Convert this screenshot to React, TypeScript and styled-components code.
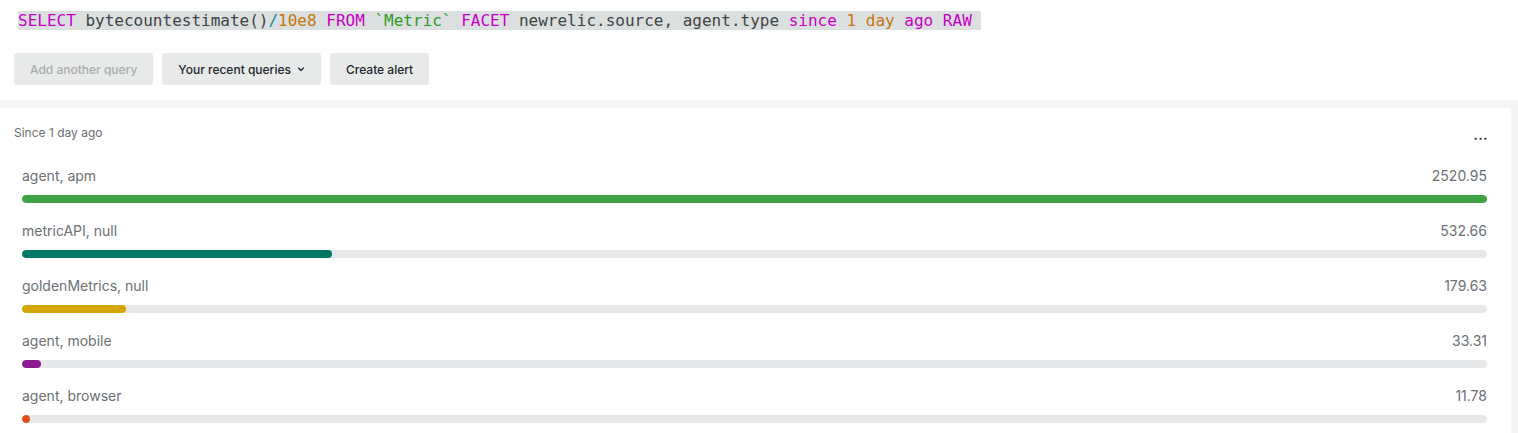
import React from 'react';
import styled, { createGlobalStyle } from 'styled-components';

const TEXT_COLOR = '#6b7075';
const TRACK_COLOR = '#e7e8e9';

const GlobalStyle = createGlobalStyle`
  html, body {
    margin: 0;
    padding: 0;
    background: #ffffff;
  }
  body {
    font-family: Inter, 'Open Sans', 'Liberation Sans', sans-serif;
    -webkit-font-smoothing: antialiased;
  }
`;

type Facet = {
  name: string;
  value: number;
  color: string;
};

const facets: Facet[] = [
  { name: 'agent, apm', value: 2520.95, color: '#3ea443' },
  { name: 'metricAPI, null', value: 532.66, color: '#007763' },
  { name: 'goldenMetrics, null', value: 179.63, color: '#d4a600' },
  { name: 'agent, mobile', value: 33.31, color: '#8b1c8d' },
  { name: 'agent, browser', value: 11.78, color: '#e04f1c' },
];

const Page = styled('div')`
  display: flex;
  flex-direction: column;
  min-height: 433px;
`;

const Editor = styled('div')`
  padding: 10px 0 0 18px;
  height: 19px;
`;

const QueryLine = styled('span')`
  font-family: 'DejaVu Sans Mono', 'Liberation Mono', monospace;
  font-size: 16px;
  line-height: 19px;
  background: #dcdfdf;
  color: #3f4446;
  white-space: pre;
`;

const Token = styled('span')<{ $kind: 'keyword' | 'number' | 'string' | 'op' }>`
  color: ${({ $kind }) =>
    $kind === 'keyword' ? '#c800c6' :
    $kind === 'number' ? '#c37710' :
    $kind === 'string' ? '#2c9a22' : '#15879a'};
`;

const Toolbar = styled('div')`
  display: flex;
  gap: 9px;
  padding: 24px 14px 15px;
`;

const ToolbarButton = styled('button')`
  height: 32px;
  padding: 0 16px;
  border: none;
  border-radius: 3px;
  background: #e8eaea;
  color: #1d252c;
  font-family: Inter, 'Liberation Sans', sans-serif;
  font-size: 12px;
  font-weight: 500;
  display: flex;
  align-items: center;
  gap: 6px;

  &:disabled {
    color: #a9acad;
  }
`;

const Chevron = styled('svg')`
  width: 8px;
  height: 8px;
`;

const Stage = styled('div')`
  flex: 1;
  background: #f4f5f5;
  padding: 8px 7px 0 0;
  display: flex;
`;

const Card = styled('div')`
  flex: 1;
  background: #ffffff;
  border-top-right-radius: 4px;
  padding: 16px 0 0;
`;

const CardHeader = styled('div')`
  display: flex;
  justify-content: space-between;
  align-items: center;
  padding: 0 23px 0 14px;
  height: 16px;
  margin-bottom: 26px;
`;

const CardTitle = styled('div')`
  font-size: 12px;
  color: ${TEXT_COLOR};
`;

const MoreButton = styled('div')`
  font-size: 14px;
  font-weight: 700;
  color: #3a3f42;
  letter-spacing: 0.2px;
  line-height: 8px;
  margin-top: 6px;
`;

const FacetList = styled('div')`
  padding: 0 24px 0 22px;
`;

const FacetRow = styled('div')`
  padding-bottom: 18px;
`;

const FacetHeading = styled('div')`
  display: flex;
  justify-content: space-between;
  font-size: 14px;
  line-height: 20px;
  color: ${TEXT_COLOR};
  margin-bottom: 9px;
`;

const Track = styled('div')`
  height: 8px;
  border-radius: 4px;
  background: ${TRACK_COLOR};
  overflow: hidden;
`;

const Fill = styled('div')<{ $color: string }>`
  height: 100%;
  min-width: 8px;
  border-radius: 4px;
  background: ${({ $color }) => $color};
`;

function App() {
  const max = Math.max(...facets.map((f) => f.value));

  return (
    <Page>
      <GlobalStyle />
      <Editor>
        <QueryLine>
          <Token $kind="keyword">SELECT</Token> bytecountestimate()
          <Token $kind="op">/</Token>
          <Token $kind="number">10e8</Token> <Token $kind="keyword">FROM</Token>{' '}
          <Token $kind="string">`Metric`</Token> <Token $kind="keyword">FACET</Token>{' '}
          newrelic.source, agent.type <Token $kind="keyword">since</Token>{' '}
          <Token $kind="number">1</Token> <Token $kind="number">day</Token>{' '}
          <Token $kind="keyword">ago</Token> <Token $kind="keyword">RAW</Token>{' '}
        </QueryLine>
      </Editor>

      <Toolbar>
        <ToolbarButton disabled>Add another query</ToolbarButton>
        <ToolbarButton>
          Your recent queries
          <Chevron viewBox="0 0 8 8" fill="none">
            <path d="M1.5 3L4 5.5L6.5 3" stroke="#1d252c" strokeWidth="1.2" strokeLinecap="round" strokeLinejoin="round" />
          </Chevron>
        </ToolbarButton>
        <ToolbarButton>Create alert</ToolbarButton>
      </Toolbar>

      <Stage>
        <Card>
          <CardHeader>
            <CardTitle>Since 1 day ago</CardTitle>
            <MoreButton>...</MoreButton>
          </CardHeader>
          <FacetList>
            {facets.map((f) => (
              <FacetRow key={f.name}>
                <FacetHeading>
                  <span>{f.name}</span>
                  <span>{f.value.toFixed(2)}</span>
                </FacetHeading>
                <Track>
                  <Fill $color={f.color} style={{ width: `${(f.value / max) * 100}%` }} />
                </Track>
              </FacetRow>
            ))}
          </FacetList>
        </Card>
      </Stage>
    </Page>
  );
}

export default App;
